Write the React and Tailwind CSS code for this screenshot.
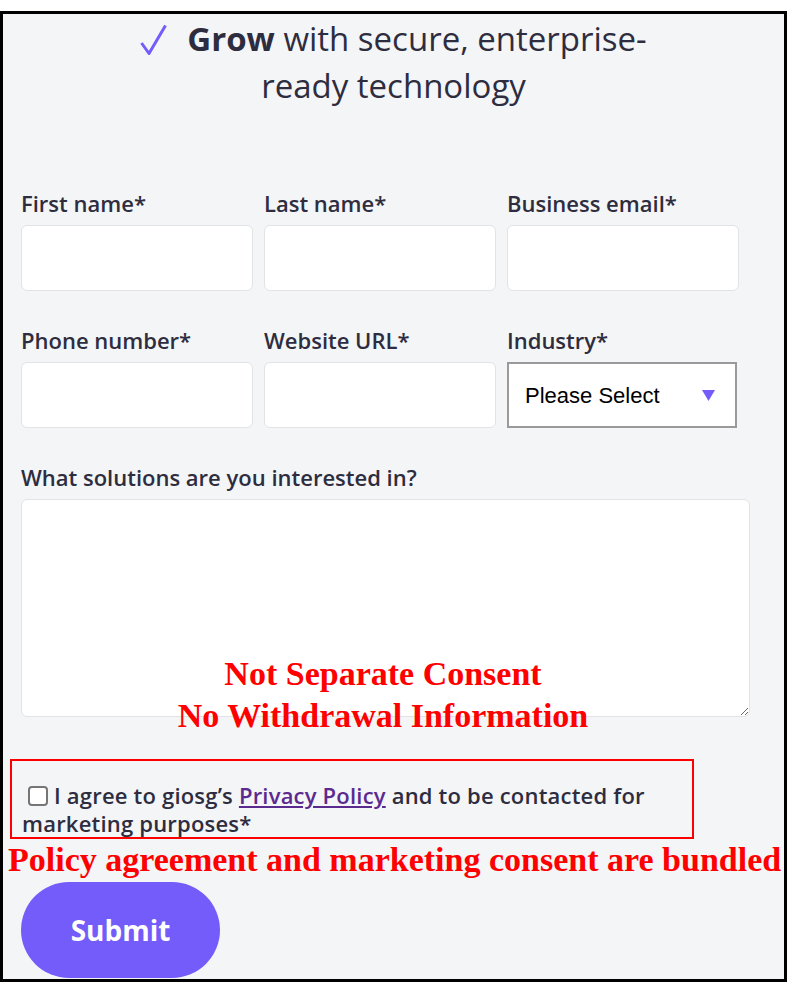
import { useState } from 'react';

const sans = { fontFamily: '"Open Sans", "Noto Sans", sans-serif' };
const serif = { fontFamily: '"Liberation Serif", "Times New Roman", serif' };

function Field({ label }) {
  return (
    <div className="flex flex-col">
      <label className="text-[22px] leading-[28px] font-semibold text-[#2e2d40] mb-2">{label}</label>
      <input className="h-[66px] w-[232px] bg-white border border-[#e2e3e7] rounded-md outline-none" />
    </div>
  );
}

function App() {
  const [agree, setAgree] = useState(false);

  return (
    <div className="w-[793px] h-[982px] bg-white pt-[11px]" style={sans}>
      <div className="w-[787px] h-[971px] border-[3px] border-black bg-[#f4f5f7] relative overflow-hidden">
        <h1 className="mx-auto w-[540px] text-center text-[33px] leading-[47px] text-[#2e2d40] pt-[1px]">
          <svg width="27" height="31" viewBox="0 0 27 31" className="inline-block align-[-4px] mr-[20px]">
            <path d="M1.5 19 L9 29.5 L25.5 1.5" fill="none" stroke="#735cf9" strokeWidth="3" strokeLinejoin="round" />
          </svg>
          <span className="font-bold">Grow</span> with secure, enterprise-ready technology
        </h1>

        <form className="px-[18px] pt-[80px]" onSubmit={(e) => e.preventDefault()}>
          <div className="grid grid-cols-[232px_232px_232px] gap-x-[11px] gap-y-[35px]">
            <Field label="First name*" />
            <Field label="Last name*" />
            <Field label="Business email*" />
            <Field label="Phone number*" />
            <Field label="Website URL*" />
            <div className="flex flex-col">
              <label className="text-[22px] leading-[28px] font-semibold text-[#2e2d40] mb-2">Industry*</label>
              <div className="h-[66px] w-[230px] bg-white border-2 border-[#9a9a9a] flex items-center justify-between pl-4 pr-5">
                <span className="text-[22px] text-black" style={{ fontFamily: '"Liberation Sans", Arial, sans-serif' }}>
                  Please Select
                </span>
                <svg width="13" height="11" viewBox="0 0 13 11">
                  <path d="M0 0 L13 0 L6.5 11 Z" fill="#735cf9" />
                </svg>
              </div>
            </div>
          </div>

          <div className="mt-[35px] flex flex-col">
            <label className="text-[22px] leading-[28px] font-semibold text-[#2e2d40] mb-2">
              What solutions are you interested in?
            </label>
            <textarea className="h-[218px] w-[729px] bg-white border border-[#e2e3e7] rounded-md outline-none" />
          </div>

          <div className="-ml-[11px] mt-[42px] w-[684px] h-[80px] border-2 border-[#ff0000] pl-[10px] pt-[21px]">
            <label className="text-[22px] leading-[26px] font-semibold text-[#2e2d40] tracking-[0.2px]">
              <input
                type="checkbox"
                checked={agree}
                onChange={() => setAgree(!agree)}
                className="w-[20px] h-[20px] ml-[6px] mr-[6px] align-[-2px] appearance-none bg-white border-2 border-[#767676] rounded-[4px]"
              />
              I agree to giosg’s{' '}
              <a href="#" className="text-[#5b2a8e] underline">Privacy Policy</a> and to be contacted for marketing
              purposes*
            </label>
          </div>

          <p className="-ml-[13px] text-[34px] leading-[42px] font-bold text-[#ff0000] whitespace-nowrap" style={serif}>
            Policy agreement and marketing consent are bundled
          </p>

          <button
            type="submit"
            className="mt-[1px] w-[199px] h-[96px] rounded-full bg-[#735cf9] text-white text-[28px] font-bold"
          >
            Submit
          </button>
        </form>

        <div
          className="absolute left-0 w-[760px] top-[639px] text-center text-[34px] leading-[42px] font-bold text-[#ff0000]"
          style={serif}
        >
          <p>Not Separate Consent</p>
          <p>No Withdrawal Information</p>
        </div>
      </div>
    </div>
  );
}

export default App;
